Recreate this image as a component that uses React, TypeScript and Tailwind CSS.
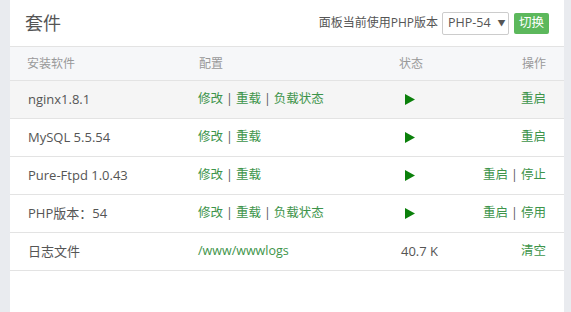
import React from "react";

const font = { fontFamily: '"Open Sans", "Noto Sans CJK SC", sans-serif' };

function Play() {
  return (
    <svg width="10" height="11" viewBox="0 0 10 11" className="block ml-[4px]">
      <polygon points="0,0 10,5.5 0,11" fill="#0b800b" />
    </svg>
  );
}

function Links({ items }: { items: string[] }) {
  return (
    <span>
      {items.map((t, i) => (
        <React.Fragment key={i}>
          {i > 0 && <span className="text-[#555] mx-[3px]">|</span>}
          <span className="text-[#3d944a]">{t}</span>
        </React.Fragment>
      ))}
    </span>
  );
}

const rows: { name: string; conf: React.ReactNode; status: React.ReactNode; act: string[]; hover?: boolean }[] = [
  { name: "nginx1.8.1", conf: <Links items={["修改", "重载", "负载状态"]} />, status: <Play />, act: ["重启"], hover: true },
  { name: "MySQL 5.5.54", conf: <Links items={["修改", "重载"]} />, status: <Play />, act: ["重启"] },
  { name: "Pure-Ftpd 1.0.43", conf: <Links items={["修改", "重载"]} />, status: <Play />, act: ["重启", "停止"] },
  { name: "PHP版本：54", conf: <Links items={["修改", "重载", "负载状态"]} />, status: <Play />, act: ["重启", "停用"] },
  {
    name: "日志文件",
    conf: <span className="text-[#3d944a]">/www/wwwlogs</span>,
    status: <span className="text-[#555]">40.7 K</span>,
    act: ["清空"],
  },
];

export default function App() {
  return (
    <div className="w-[571px] h-[312px] bg-[#e9ebef] flex overflow-hidden" style={font}>
      <div className="ml-[10px] w-[554px] h-full bg-white flex flex-col">
        <div className="h-[47px] flex items-center justify-between pl-[15px] pr-[15px] border-b border-[#e3e3e3] shrink-0">
          <span className="text-[18px] text-[#555]">套件</span>
          <div className="flex items-center">
            <span className="text-[12px] text-[#555] mr-[4px]">面板当前使用PHP版本</span>
            <div className="w-[67px] h-[23px] border border-[#ccc] rounded-[2px] flex items-center pl-[5px] text-[12.5px] text-[#555]">
              <span>PHP-54</span>
              <span className="text-[8px] ml-[7px]">▼</span>
            </div>
            <div className="ml-[5px] w-[35px] h-[21px] bg-[#5cb85c] rounded-[2px] text-white text-[12.5px] flex items-center justify-center">
              切换
            </div>
          </div>
        </div>
        <div className="h-[34px] flex items-center pl-[17px] pr-[18px] bg-[#f6f7f9] border-b border-[#e3e3e3] text-[12px] text-[#999] shrink-0">
          <div className="w-[172px]">安装软件</div>
          <div className="w-[200px]">配置</div>
          <div className="flex-1">状态</div>
          <div>操作</div>
        </div>
        {rows.map((r, i) => (
          <div
            key={i}
            className={`h-[38px] flex items-center pl-[18px] pr-[18px] border-b border-[#e3e3e3] text-[13px] shrink-0 ${r.hover ? "bg-[#f5f5f5]" : ""}`}
          >
            <div className="w-[170px] text-[#555]">{r.name}</div>
            <div className="w-[202px] text-[12.5px]">{r.conf}</div>
            <div className="flex-1 pl-[1px]">{r.status}</div>
            <div className="text-[12.5px]"><Links items={r.act} /></div>
          </div>
        ))}
      </div>
    </div>
  );
}
